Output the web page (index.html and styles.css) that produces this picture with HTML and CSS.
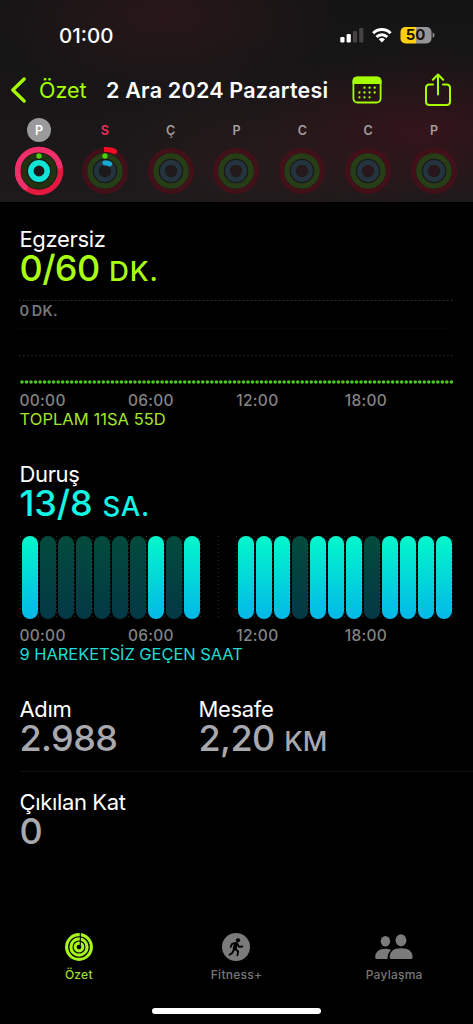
FILE: index.html
```html
<!DOCTYPE html>
<html lang="tr">
<head>
<meta charset="utf-8">
<meta name="viewport" content="width=device-width, initial-scale=1">
<title>Özet</title>
<link rel="stylesheet" href="styles.css">
</head>
<body>
<div class="app">
  <header class="header">
    <div class="status">
      <span class="clock">01:00</span>
      <svg class="status-icons" width="96" height="20" viewBox="0 0 96 20">
        <g fill="#fff"><rect x="1.3" y="12" width="4.2" height="5.4" rx="1.2"/><rect x="7.6" y="9" width="4.2" height="8.4" rx="1.2"/></g>
        <g fill="#444243"><rect x="13.9" y="6" width="4.2" height="11.4" rx="1.2"/><rect x="20.2" y="3" width="4.2" height="14.4" rx="1.2"/></g>
        <g transform="translate(-.8 0)"><g fill="none" stroke="#fff" stroke-width="2.9"><path d="M35 8.2a12.2 12.2 0 0 1 17.4 0"/><path d="M38.3 12a7.5 7.5 0 0 1 10.8 0"/></g>
        <path d="M43.7 17.4l-3.1-3.1a4.4 4.4 0 0 1 6.2 0z" fill="#fff"/></g>
        <clipPath id="cell"><rect x="61.5" y="2" width="31" height="16.4" rx="5"/></clipPath>
        <g clip-path="url(#cell)"><rect x="61" y="2" width="16" height="17" fill="#ffcf0b"/><rect x="77" y="2" width="16" height="17" fill="#969496"/></g>
        <path d="M93.7 7.6q1.8.6 1.8 2.6t-1.8 2.6z" fill="#969496"/>
        <text class="battery-text" x="76.600" y="15.400" text-anchor="middle">50</text>
      </svg>
    </div>
    <nav class="nav">
      <svg class="back" width="16" height="26" viewBox="0 0 16 26"><path d="M14.2 2L2.800 13l11.400 11" fill="none" stroke="#a6ff00" stroke-width="3.3" stroke-linecap="round" stroke-linejoin="round"/></svg>
      <span class="back-label">Özet</span>
      <h1 class="title">2 Ara 2024 Pazartesi</h1>
      <svg class="calendar" width="30" height="28" viewBox="0 0 30 28">
        <rect x="1.4" y="1.5" width="27.2" height="25" rx="4" fill="none" stroke="#a6ff00" stroke-width="1.8"/>
        <path d="M.5 8V5Q.5.7 5 .7h20Q29.5.7 29.5 5v3z" fill="#a6ff00"/>
        <g stroke="#a6ff00" stroke-width="2.3" stroke-linecap="round" stroke-dasharray="0 5.1"><path d="M12.5 11.7h10.4M7.4 16.5h15.5M7.4 21.3h10.4"/></g>
      </svg>
      <svg class="share" width="28" height="34" viewBox="0 0 28 34" fill="none" stroke="#a6ff00" stroke-width="2" stroke-linecap="round" stroke-linejoin="round"><path d="M9 11.5H5.5Q2 11.5 2 15v13.5Q2 32 5.5 32h17Q26 32 26 28.5V15q0-3.5-3.5-3.5H19M14 21.5V2M8.8 6.8L14 1.5l5.2 5.3"/></svg>
    </nav>
    <div class="week" id="week"></div>
  </header>

  <main class="content">
    <section class="metric exercise">
      <h2 class="label">Egzersiz</h2>
      <p class="value">0/60 <span class="unit">DK.</span></p>
      <div class="chart">
        <svg width="436" height="104" viewBox="0 0 436 104">
          <g stroke-dasharray="1.5 2.5" stroke-width="1"><path d="M-1 14.5H435" stroke="#343434"/><path d="M-1 42.5H435" stroke="#0d0d0d"/><path d="M-1 69.5H435" stroke="#2c2c2c"/></g>
          <path d="M2 96H433.5" stroke="#4cc821" stroke-width="3.6" stroke-linecap="round" stroke-dasharray="0 4.52"/>
        </svg>
        <span class="scale">0 DK.</span>
      </div>
      <div class="axis"><span>00:00</span><span>06:00</span><span>12:00</span><span>18:00</span></div>
      <p class="note">TOPLAM 11SA 55D</p>
    </section>

    <section class="metric stand">
      <h2 class="label">Duruş</h2>
      <p class="value">13/8 <span class="unit">SA.</span></p>
      <div class="hours" id="hours"></div>
      <div class="axis"><span>00:00</span><span>06:00</span><span>12:00</span><span>18:00</span></div>
      <p class="note">9 HAREKETSİZ GEÇEN SAAT</p>
    </section>

    <section class="totals">
      <div class="total steps"><h2 class="label">Adım</h2><p class="value">2.988</p></div>
      <div class="total distance"><h2 class="label">Mesafe</h2><p class="value">2,20 <span class="unit">KM</span></p></div>
    </section>
    <section class="total floors"><h2 class="label">Çıkılan Kat</h2><p class="value">0</p></section>
  </main>

  <footer class="tabs">
    <div class="tab active">
      <svg width="28" height="28" viewBox="0 0 28 28" fill="none" stroke="#a8f51c" stroke-width="3.1"><circle cx="14" cy="14" r="12.4"/><circle cx="14" cy="14" r="8.1"/><circle cx="14" cy="14" r="3.9"/><path d="M15.3 0v12" stroke="#000" stroke-width="1.1"/></svg>
      <span>Özet</span>
    </div>
    <div class="tab">
      <svg width="28" height="28" viewBox="0 0 28 28"><circle cx="14" cy="14" r="14" fill="#7b7b7b"/><circle cx="16" cy="7.3" r="2.1" fill="#000"/><g fill="none" stroke="#000" stroke-linecap="round" stroke-linejoin="round"><path d="M14 11l-1.3 4.5" stroke-width="4"/><path d="M14 10l-4 .9-1.3 3M15.4 11l1.7 2.800 3.2-.3M13.3 16l2.9 2.5-.8 3.8M11.7 17l-1.4 3-2.8 1.7" stroke-width="1.8"/></g></svg>
      <span>Fitness+</span>
    </div>
    <div class="tab">
      <svg width="38" height="28" viewBox="0 0 38 28" fill="#7b7b7b"><ellipse cx="10.4" cy="8.3" rx="4.7" ry="5.3"/><path d="M.2 24.5q0-8.7 10.3-8.7 3.1 0 5.5 1.2-3.5 3-3.5 9H2q-1.8 0-1.8-1.5z"/><ellipse cx="26" cy="7.3" rx="5.4" ry="6.1"/><path d="M14.6 24.5q0-9.3 11.5-9.3t11.5 9.3q0 1.5-1.7 1.5H16.4q-1.8 0-1.8-1.5z"/></svg>
      <span>Paylaşma</span>
    </div>
  </footer>
  <div class="home"></div>
</div>
<script src="app.js"></script>
</body>
</html>
```
FILE: styles.css
```css
* { box-sizing: border-box; margin: 0; padding: 0; }
body { background: #000; color: #fff; font-family: Inter, "Liberation Sans", sans-serif; }
svg { display: block; flex: none; overflow: visible; }
.app { width: 473px; height: 1024px; display: flex; flex-direction: column; background: #000; overflow: hidden; }

.header {
  height: 202px; flex: none;
  background:
    radial-gradient(ellipse 170px 80px at 165px 15px, rgba(60, 25, 28, .5), transparent),
    radial-gradient(ellipse 170px 80px at 430px 130px, rgba(68, 18, 27, .6), transparent),
    radial-gradient(ellipse 190px 90px at 270px 155px, rgba(55, 28, 30, .4), transparent),
    linear-gradient(#151415, #181617 50%, #1c1a1b);
}
.status { height: 70px; display: flex; justify-content: space-between; padding: 25px 38px 0 59px; }
.clock { font-size: 20.5px; line-height: 21px; font-weight: 500; }
.battery-text { font: 700 15px Inter, sans-serif; fill: #19130d; }
.nav { height: 44px; display: flex; padding-left: 10px; }
.back { margin-top: 7px; }
.back-label { width: 67px; margin-left: 13px; font-size: 21.5px; line-height: 41px; color: #a6ff00; white-space: nowrap; }
.title { width: 246px; font-size: 21.5px; line-height: 41px; font-weight: 600; white-space: nowrap; letter-spacing: .22px; }
.calendar { margin-top: 6px; }
.share { margin: 3px 0 0 41.5px; }
.week { display: grid; grid-template-columns: repeat(7, 65.85px); padding-left: 6px; }
.day { display: flex; flex-direction: column; align-items: center; }
.letter { width: 24px; height: 24px; margin-top: 4px; border-radius: 50%; font-size: 12.5px; line-height: 25px; font-weight: 600; text-align: center; color: #a49da0; }
.letter.selected { background: #9a999c; color: #fff; }
.letter.today { color: #f52b58; }
.rings { margin-top: 4px; }

.content { flex: 1; padding: 25px 0 0 19.5px; }
.metric { height: 235px; }
.label { font-size: 22px; line-height: 24px; font-weight: 400; letter-spacing: -.35px; }
.value { font-size: 36px; line-height: 35px; font-weight: 450; white-space: nowrap; height: 35px; letter-spacing: -.6px; }
.unit { font-size: 27.5px; letter-spacing: .8px; font-weight: 550; margin-left: .5px; }
.exercise .value { color: #a8ff14; }
.stand .value { color: #14f5e6; letter-spacing: -.1px; }
.stand .unit { letter-spacing: .6px; }
.chart { height: 104px; display: grid; }
.chart > * { grid-area: 1 / 1; }
.scale { margin-top: 15px; font-size: 14.5px; line-height: 20px; font-weight: 600; color: #777; word-spacing: -1.5px; letter-spacing: .3px; }
.axis { display: grid; grid-template-columns: repeat(4, 108.4px); font-size: 15.5px; line-height: 21px; height: 20px; font-weight: 500; color: #838383; letter-spacing: .3px; }
.note { font-size: 16.5px; line-height: 18px; white-space: nowrap; }
.exercise .note { color: #a2e52c; letter-spacing: .05px; }
.stand .note { color: #1fdcd3; letter-spacing: -.07px; }
.hours { height: 104px; padding: 15px 0 0 .5px; display: grid; grid-template-columns: repeat(24, 18.03px) 1px; }
.hour { height: 83px; padding: 0 .5px 0 1.5px; background: repeating-linear-gradient(#303434 0 1px, transparent 1px 4px) 0 0 / 1px 100% no-repeat; }
.bar { height: 100%; border-radius: 8px; background: linear-gradient(#02f8cb, #03b8e8); }
.bar.idle { background: linear-gradient(#034b3c, #033846); }
.totals { display: flex; height: 75px; border-bottom: 1px solid #121212; }
.total .value { color: #a7a9ae; }
.total .unit { letter-spacing: 0; font-weight: 500; font-size: 27px; }
.steps { width: 179px; }
.floors { padding-top: 18px; }

.tabs { height: 92px; flex: none; display: grid; grid-template-columns: repeat(3, 1fr); }
.tab { display: flex; flex-direction: column; align-items: center; color: #777; font-size: 12px; line-height: 18px; font-weight: 500; gap: 5px; padding-top: 1px; letter-spacing: .25px; }
.active { color: #9edb31; }
.home { width: 169px; height: 6px; border-radius: 3px; background: #fff; margin: -16px auto 10px; flex: none; }
```
FILE: app.js
```js
// Activity rings for each day of the week
const days = ['P', 'S', 'Ç', 'P', 'C', 'C', 'P'];
const tracks = [
  '<circle r="15" stroke="#22330f" stroke-width="5.5"/>',
  '<circle r="20.6" stroke="#421019" stroke-width="5"/><circle r="15" stroke="#263d16" stroke-width="5.5"/><circle r="8.7" stroke="#24343f" stroke-width="5"/><circle r="11.7" stroke="#15191a" stroke-width="1"/>'
];
const first = '<circle r="21.4" stroke="#e31940" stroke-width="5.5"/>' + tracks[0] +
  '<path d="M-14 16.2A21.4 21.4 0 1 1 20.8-5" stroke="#f0306b" stroke-width="5.5" stroke-linecap="round"/>' +
  '<circle r="8.2" stroke="#10e4d5" stroke-width="5.5"/><circle cy="-15" r="2.7" fill="#4ccf12"/>';
const second = tracks[1] +
  '<g stroke-linecap="round"><path d="M-1-21.5Q5.5-22 9.7-19.5" stroke="#f20d24" stroke-width="5" stroke-linecap="butt"/><path d="M9.5-19.6l.2.1" stroke="#f20d24" stroke-width="5"/><path d="M0-8Q2.5-8.3 4.7-7" stroke="#16a9d4" stroke-width="5"/></g><circle cy="-15" r="2.7" fill="#4cd00b"/>';
document.getElementById('week').innerHTML = days.map((d, i) => {
  const art = i === 0 ? first : i === 1 ? second : tracks[1];
  const state = i === 0 ? ' selected' : i === 1 ? ' today' : '';
  return `<div class="day"><span class="letter${state}">${d}</span><svg class="rings" width="50" height="50" viewBox="-25 -25 50 50" fill="none">${art}</svg></div>`;
}).join('');

// Hourly stand status: s = stood, i = idle, - = no data
document.getElementById('hours').innerHTML = [...'siiiiiisis--sssisssissss'].map(h =>
  `<div class="hour">${h === '-' ? '' : `<div class="bar${h === 'i' ? ' idle' : ''}"></div>`}</div>`
).join('') + '<div class="hour"></div>';
```
